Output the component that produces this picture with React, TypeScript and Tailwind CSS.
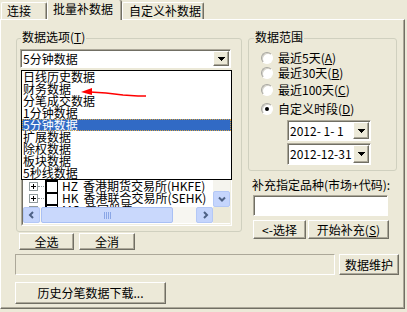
import React from 'react'

const raised =
  'bg-[#ECE9D8] border border-t-white border-l-white border-r-[#716F64] border-b-[#716F64] shadow-[inset_-1px_-1px_0_#ACA899]'
const sunken =
  'border border-t-[#ACA899] border-l-[#ACA899] border-r-white border-b-white shadow-[inset_1px_1px_0_#716F64]'

const periods = ['日线历史数据', '财务数据', '分笔成交数据', '1分钟数据', '5分钟数据', '扩展数据', '除权数据', '板块数据', '5秒线数据']

const markets: [string, string][] = [
  ['SZ', '深圳证券交易所'],
  ['SH', '上海证券交易所'],
  ['DL', '大连商品交易所(DCE)'],
  ['ZZ', '郑州商品交易所(CZCE)'],
  ['SQ', '上海期货交易所(SHFE)'],
  ['ZJ', '中国金融期货交易所'],
  ['HI', '香港指数'],
  ['HG', '香港创业板'],
  ['HB', '香港主板'],
  ['HZ', '香港期货交易所(HKFE)'],
  ['HK', '香港联合交易所(SEHK)'],
  ['MG', '美国股票'],
]

function Btn({ className = '', children }: { className?: string; children: React.ReactNode }) {
  return <div className={`${raised} flex items-center justify-center whitespace-nowrap ${className}`}>{children}</div>
}

function DropBtn({ className = '' }: { className?: string }) {
  return (
    <div className={`${raised} w-[16px] flex items-center justify-center ${className}`}>
      <svg width="7" height="4" viewBox="0 0 7 4" shapeRendering="crispEdges">
        <path d="M0 0h7L3.5 4z" fill="#000" />
      </svg>
    </div>
  )
}

function Radio({ checked = false }: { checked?: boolean }) {
  return (
    <span className="w-[12px] h-[12px] rounded-full bg-white border border-t-[#A7A6A0] border-l-[#A7A6A0] border-r-white border-b-white shadow-[inset_1px_1px_0_#D4D2C8] flex items-center justify-center">
      {checked && <span className="w-[4px] h-[4px] rounded-full bg-black" />}
    </span>
  )
}

function ScrollBtn({ dir }: { dir: 'left' | 'right' | 'down' }) {
  const d = dir === 'left' ? 'M5 1L2 4l3 3' : dir === 'right' ? 'M3 1l3 3-3 3' : 'M1 2.5l3 3 3-3'
  return (
    <div className="w-[17px] h-[16px] shrink-0 rounded-[2px] border border-[#B4C8F6] bg-[#C5D5FC] flex items-center justify-center">
      <svg width="8" height="8" viewBox="0 0 8 8">
        <path d={d} stroke="#4D6185" strokeWidth="2" fill="none" />
      </svg>
    </div>
  )
}

function TreeRow({ code, name }: { code: string; name: string }) {
  return (
    <div className="flex items-center h-[12px] shrink-0 whitespace-nowrap">
      <span className="ml-[6px] w-[9px] h-[9px] border border-[#919B9C] bg-white relative flex items-center justify-center">
        <span className="absolute w-[5px] h-[1px] bg-black" />
        <span className="absolute w-[1px] h-[5px] bg-black" />
      </span>
      <span className="w-[6px] h-0 border-t border-dotted border-[#919B9C]" />
      <span className="ml-[1px] w-[13px] h-[13px] shrink-0 bg-white border border-black shadow-[inset_1px_1px_0_#000]" />
      <span className="ml-[4px]">{code}</span>
      <span className="ml-[5px]">{name}</span>
    </div>
  )
}

export default function App() {
  return (
    <div className="w-[407px] h-[312px] overflow-hidden bg-[#ECE9D8] text-[12px] leading-[12px] text-black font-['Noto_Sans_CJK_SC',sans-serif]">
      {/* tabs */}
      <div className="flex items-end h-[19px]">
        <div className="ml-[1px] w-[46px] h-[17px] pl-[5px] pt-[2px] border border-b-0 border-t-white border-l-white border-r-[#716F64] rounded-t-[2px] shadow-[inset_-1px_0_0_#ACA899]">
          连接
        </div>
        <div className="relative z-10 w-[75px] h-[20px] -mb-[1px] pl-[5px] pt-[3px] bg-[#ECE9D8] border-l border-r border-l-white border-r-[#716F64] rounded-t-[2px] shadow-[inset_-1px_0_0_#ACA899]">
          批量补数据
        </div>
        <div className="w-[82px] h-[17px] pl-[6px] pt-[2px] border border-b-0 border-t-white border-l-white border-r-[#716F64] rounded-t-[2px] shadow-[inset_-1px_0_0_#ACA899]">
          自定义补数据
        </div>
      </div>

      {/* panel */}
      <div className="w-[405px] h-[290px] pl-[14px] pt-[18px] border border-t-white border-l-white border-r-[#716F64] border-b-[#716F64] shadow-[inset_-1px_-1px_0_#ACA899]">
        <div className="flex items-start">
          {/* left column */}
          <div className="ml-[1px] flex flex-col">
            <div className="relative w-[226px] h-[194px] border border-[#D0D0BF] rounded-[3px]">
              <span className="absolute -top-[8px] left-[4px] px-[1px] bg-[#ECE9D8]">
                数据选项(<span className="underline">T</span>)
              </span>

              <div className={`${sunken} mt-[10px] ml-[3px] w-[211px] h-[19px] bg-white flex items-center`}>
                <span className="flex-1 pl-[2px]">5分钟数据</span>
                <DropBtn className="h-[15px] mr-[1px]" />
              </div>

              <div className="mt-[2px] ml-[4px] w-[211px] h-[156px] border border-t-[#ACA899] border-l-[#ACA899] border-r-white border-b-white">
                <div className="h-[154px] border border-t-[#716F64] border-l-[#716F64] border-r-[#F1EFE2] border-b-[#F1EFE2] bg-white flex flex-col">
                  <div className="flex h-[135px] shrink-0">
                    <div className="w-[190px] h-[135px] overflow-hidden flex flex-col">
                      {markets.map(([c, n]) => (
                        <TreeRow key={c} code={c} name={n} />
                      ))}
                    </div>
                    <div className="w-[17px] bg-[#F5F4EE] flex flex-col justify-end">
                      <ScrollBtn dir="down" />
                    </div>
                  </div>
                  <div className="flex h-[16px] shrink-0">
                    <div className="w-[190px] flex bg-[#F7F6F1]">
                      <ScrollBtn dir="left" />
                      <div className="ml-[1px] w-[132px] h-[16px] rounded-[2px] border border-[#A9C0F4] bg-[#C9D8FC] flex items-center justify-center gap-[1px]">
                        <span className="w-[1px] h-[7px] bg-[#8AA6E6]" />
                        <span className="w-[1px] h-[7px] bg-[#8AA6E6]" />
                        <span className="w-[1px] h-[7px] bg-[#8AA6E6]" />
                        <span className="w-[1px] h-[7px] bg-[#8AA6E6]" />
                      </div>
                      <div className="flex-1" />
                      <ScrollBtn dir="right" />
                    </div>
                    <div className="w-[17px] bg-[#ECE9D8]" />
                  </div>
                </div>
              </div>

              {/* open dropdown list */}
              <div className="absolute left-[4px] top-[31px] z-10 w-[211px] h-[110px] border border-black bg-white">
                {periods.map((p) => (
                  <div
                    key={p}
                    className={
                      p === '5分钟数据'
                        ? 'h-[12px] pl-[1px] whitespace-nowrap bg-[#316AC5] text-white outline-1 outline-dotted outline-[#D9A441] -outline-offset-1'
                        : 'h-[12px] pl-[1px] whitespace-nowrap'
                    }
                  >
                    {p}
                  </div>
                ))}
                <svg className="absolute left-0 top-0 pointer-events-none" width="211" height="108" viewBox="0 0 211 108">
                  <polyline points="68,21 84,22 101,24 116,25 124,25" stroke="#FF0000" strokeWidth="1.5" fill="none" />
                  <polygon points="59,21 70,17 70,24" fill="#FF0000" />
                </svg>
              </div>
            </div>

            <div className="flex gap-[5px] mt-[1px] ml-[3px]">
              <Btn className="w-[55px] h-[17px]">全选</Btn>
              <Btn className="w-[56px] h-[17px]">全消</Btn>
            </div>
          </div>

          {/* right column */}
          <div className="ml-[6px] flex flex-col">
            <div className="relative w-[149px] h-[133px] border border-[#D0D0BF] rounded-[3px] pl-[12px] pt-[12px] flex flex-col">
              <span className="absolute -top-[8px] left-[5px] px-[1px] bg-[#ECE9D8]">数据范围</span>
              <div className="flex items-center h-[13px]">
                <Radio />
                <span className="ml-[5px]">最近5天(<span className="underline">A</span>)</span>
              </div>
              <div className="flex items-center h-[13px] mt-[2px]">
                <Radio />
                <span className="ml-[5px]">最近30天(<span className="underline">B</span>)</span>
              </div>
              <div className="flex items-center h-[13px] mt-[4px]">
                <Radio />
                <span className="ml-[5px]">最近100天(<span className="underline">C</span>)</span>
              </div>
              <div className="flex items-center h-[13px] mt-[6px]">
                <Radio checked />
                <span className="ml-[5px]">自定义时段(<span className="underline">D</span>)</span>
              </div>
              <div className={`${sunken} mt-[5px] ml-[26px] w-[84px] h-[21px] bg-white flex items-center`}>
                <span className="flex-1 pl-[2px] whitespace-pre">2012- 1- 1</span>
                <DropBtn className="h-[17px] mr-[1px]" />
              </div>
              <div className={`${sunken} mt-[2px] ml-[26px] w-[84px] h-[22px] bg-white flex items-center`}>
                <span className="flex-1 pl-[2px]">2012-12-31</span>
                <DropBtn className="h-[18px] mr-[1px]" />
              </div>
            </div>

            <div className="mt-[8px] ml-[4px] whitespace-nowrap">补充指定品种(市场+代码):</div>
            <div className={`${sunken} mt-[4px] ml-[5px] w-[135px] h-[21px] bg-white`} />
            <div className="flex gap-[2px] mt-[4px] ml-[5px]">
              <Btn className="w-[53px] h-[19px]">&lt;-选择</Btn>
              <Btn className="w-[81px] h-[19px]">
                开始补充(<span className="underline">S</span>)
              </Btn>
            </div>
          </div>
        </div>

        <div className="flex gap-[4px] mt-[4px]">
          <div className="w-[320px] h-[21px] border border-t-[#ACA899] border-l-[#ACA899] border-r-white border-b-white" />
          <Btn className="w-[60px] h-[21px]">数据维护</Btn>
        </div>

        <Btn className="mt-[7px] w-[151px] h-[22px]">历史分笔数据下载...</Btn>
      </div>
    </div>
  )
}
